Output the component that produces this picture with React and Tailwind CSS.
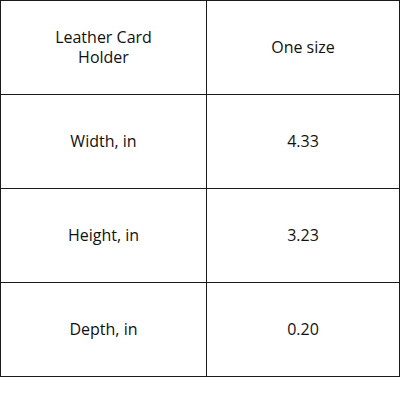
import { Fragment } from 'react';

const rows = [
  ['Leather Card Holder', 'One size'],
  ['Width, in', '4.33'],
  ['Height, in', '3.23'],
  ['Depth, in', '0.20'],
];

export default function App() {
  return (
    <div className="w-[400px] h-[400px] bg-white" style={{ fontFamily: '"Open Sans", sans-serif' }}>
      <div className="grid grid-cols-[206px_193px] border-l border-t border-[#1a1a1a] text-[16px] leading-[20px] text-[#111]">
        {rows.map(([a, b]) => (
          <Fragment key={a}>
            <div className="h-[94px] pb-[2px] flex items-center justify-center text-center px-12 border-r border-b border-[#1a1a1a]">
              {a}
            </div>
            <div className="h-[94px] pb-[2px] flex items-center justify-center text-center border-r border-b border-[#1a1a1a]">
              {b}
            </div>
          </Fragment>
        ))}
      </div>
    </div>
  );
}
